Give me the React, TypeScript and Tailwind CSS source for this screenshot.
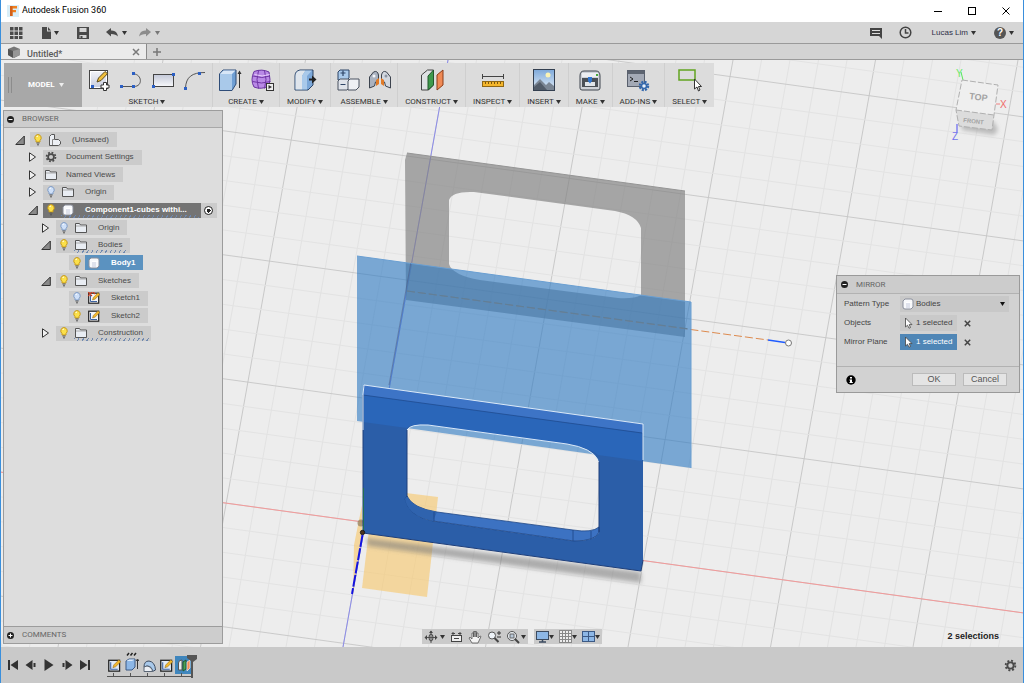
import React from 'react';

interface IconProps {
  children: React.ReactNode;
  size?: number;
  className?: string;
}

const Icon: React.FC<IconProps> = ({ children, size = 16, className = '' }) => (
  <svg
    width={size}
    height={size}
    viewBox={`0 0 ${size} ${size}`}
    className={`block shrink-0 ${className}`}
    fill="none"
    aria-hidden="true"
  >
    {children}
  </svg>
);

const Caret: React.FC<{ className?: string }> = ({ className = 'text-[#333]' }) => (
  <svg width="5" height="4" viewBox="0 0 5 4" className={`block shrink-0 ${className}`} aria-hidden="true">
    <path d="M0 0h5L2.5 4z" fill="currentColor" />
  </svg>
);

const Gear: React.FC<{ size?: number; color?: string }> = ({ size = 14, color = '#4a4a4a' }) => (
  <svg width={size} height={size} viewBox="0 0 14 14" fill="none" className="block shrink-0" aria-hidden="true">
    <circle cx="7" cy="7" r="5.2" stroke={color} strokeWidth="2" strokeDasharray="2.1 1.98" />
    <circle cx="7" cy="7" r="3.4" stroke={color} strokeWidth="2" />
  </svg>
);

/* ---------- toolbar icons ---------- */

const SketchIcon = () => (
  <Icon size={24}>
    <defs>
      <linearGradient id="sketchFill" x1="0" y1="0" x2="0" y2="1">
        <stop stopColor="#f4f5f9" />
        <stop offset="1" stopColor="#c6cbdc" />
      </linearGradient>
    </defs>
    <rect x="2.500" y="2.500" width="18" height="18" fill="url(#sketchFill)" stroke="#444" />
    <rect x="3.500" y="3.500" width="16" height="16" stroke="#fff" />
    <path d="M10 14l1.500-4L18 3.500l2.500 2.200L14 12.500z" fill="#f0bf3c" stroke="#5b4a1c" />
    <rect x="4" y="17" width="3" height="3" fill="#2b5fc4" />
    <path d="M16.500 14.500h3v2.500h2.500v3h-2.500v2.500h-3V20H14v-3h2.500z" fill="#fff" stroke="#333" />
  </Icon>
);

const LineIcon = () => (
  <Icon size={24}>
    <path d="M2 18.500h13c9 0 8-12 0-12.500" stroke="#555" />
    <rect x="1" y="17" width="3" height="3" fill="#2b5fc4" />
    <rect x="13" y="17" width="3" height="3" fill="#2b5fc4" />
    <rect x="13" y="4" width="3" height="3" fill="#2b5fc4" />
  </Icon>
);

const RectIcon = () => (
  <Icon size={24}>
    <defs>
      <linearGradient id="rectFill" x1="0" y1="0" x2="0" y2="1">
        <stop stopColor="#c3c8d8" />
        <stop offset="1" stopColor="#f7f8fa" />
      </linearGradient>
    </defs>
    <rect x="2.500" y="6.500" width="20" height="12" fill="url(#rectFill)" stroke="#444" />
    <rect x="1" y="17" width="3" height="3" fill="#2b5fc4" />
    <rect x="21" y="5" width="3" height="3" fill="#2b5fc4" />
  </Icon>
);

const ArcIcon = () => (
  <Icon size={24}>
    <path d="M2.500 20C3 9 9 4.500 22 4.500" stroke="#555" />
    <rect x="1" y="19" width="3" height="3" fill="#2b5fc4" />
    <rect x="15" y="4" width="3" height="3" fill="#2b5fc4" />
  </Icon>
);

const ExtrudeIcon = () => (
  <Icon size={24}>
    <path d="M1.500 6L5 2h13v14l-4 6.500H1.500z" fill="#6f9fd4" stroke="#2f4d78" />
    <path d="M2 6l3.500-3.500h12L14 6z" fill="#d7e6f7" />
    <rect x="2" y="6" width="12" height="16" fill="#a9c9ea" />
    <path d="M21.500 5v15" stroke="#333" />
    <path d="M19.500 6l2-3.500 2 3.500z" fill="#333" />
  </Icon>
);

const FormIcon = () => (
  <Icon size={24}>
    <path d="M4 3.500Q12 .5 19 4q2 8 0 14-8 4-15 1-4-7 0-15.500z" fill="#b98ae6" stroke="#6a35a0" />
    <path d="M3 8q9 3 17 0M2.500 13.500q9 3 18 0M8.500 2.500q-3 9 0 18M14.500 2.500q3 9 0 18" stroke="#6f35a5" />
    <path d="M4.500 6.500q8 3 15 0" stroke="#e6cffb" />
    <rect x="16.500" y="15.500" width="7" height="7" fill="#eee" stroke="#333" />
    <path d="M18.500 17l3.500 2-3.500 2z" fill="#333" />
  </Icon>
);

const ModifyIcon = () => (
  <Icon size={24}>
    <path d="M2 8q0-5 5-6h13v15l-5 5H2z" fill="#7ba7d8" stroke="#2d4466" />
    <path d="M2.500 8q0-5 5-5.500h5L9 8v13.500H2.500z" fill="#dfe5ec" />
    <path d="M9 8l3.500-5.500H19L14 8v13.500H9z" fill="#a9c9ea" />
    <path d="M16 10.500h3v-3l4.500 4-4.500 4v-3h-3z" fill="#222" />
  </Icon>
);

const ComponentIcon = () => (
  <Icon size={24}>
    <path d="M2 4l2-2h9v8l-2 2H2z" fill="#a9c9ea" stroke="#2d4466" />
    <path d="M2 13l2-2h9v9l-2 2H2z" fill="#dfe3ea" stroke="#4a5361" />
    <path d="M12 13l2-2h9v8l-3 3h-8z" fill="#eef0f4" stroke="#4a5361" />
    <path d="M4.500 5h5M7 2.500V8M4.500 16.500h5" stroke="#2d4466" strokeWidth="1.200" />
  </Icon>
);

const JointIcon = () => (
  <Icon size={24}>
    <path d="M1.500 20V9l4-5q4-2 5 3v5l-3 2-1 4z" fill="#aab2bf" stroke="#3c434e" />
    <path d="M22.500 20V9l-4-5q-4-2-5 3v5l3 2 1 4z" fill="#d3d8df" stroke="#3c434e" />
    <circle cx="6" cy="8" r="1.500" fill="#f4f6f9" />
    <circle cx="18" cy="8" r="1.500" fill="#8d96a4" />
    <path d="M8 12l3-2v6l-3 2zM16 12l-3-2v6l3 2z" fill="#e07b28" />
  </Icon>
);

const ConstructIcon = () => (
  <Icon size={24}>
    <path d="M1.500 7l6-5h6v15l-5 5h-7z" fill="#dfe2e4" stroke="#444" />
    <path d="M8 8l5.500-6v15L8 22z" fill="#3f9a4c" stroke="#23582c" />
    <path d="M17 7l6-5v15l-6 5z" fill="#f08a55" stroke="#8d3c18" />
  </Icon>
);

const InspectIcon = () => (
  <Icon size={24}>
    <path d="M1.500 6v5M22.500 6v5M2 8.500h20" stroke="#444" />
    <rect x="1.500" y="13.500" width="21" height="5" fill="#f4b62c" stroke="#8f6714" />
    <path d="M4.500 14v2M7.500 14v2M10.500 14v2M13.500 14v2M16.500 14v2M19.500 14v2" stroke="#7b560c" />
  </Icon>
);

const InsertIcon = () => (
  <Icon size={24}>
    <defs>
      <linearGradient id="insertSky" x1="0" y1="0" x2="0" y2="1">
        <stop stopColor="#7ea9da" />
        <stop offset="1" stopColor="#e4eef8" />
      </linearGradient>
    </defs>
    <rect x="1.500" y="1.500" width="21" height="21" fill="url(#insertSky)" stroke="#333f50" />
    <circle cx="16" cy="7" r="2.500" fill="#fbf3b4" />
    <path d="M2 17l6-6 6 6 3-3 5 4v4H2z" fill="#7b8694" />
    <path d="M2 19l6-5 7 8H2z" fill="#525c69" />
  </Icon>
);

const MakeIcon = () => (
  <Icon size={24}>
    <path d="M2 8q0-5 4-5h12q4 0 4 5v12q0 2-2 2H4q-2 0-2-2z" fill="#cdd1d8" stroke="#3f454e" />
    <path d="M4 5h16v4H4z" fill="#eceef2" />
    <rect x="4" y="10" width="16" height="9" fill="#4a5058" />
    <rect x="7" y="14" width="10" height="4" fill="#dfe4ea" />
    <path d="M10 9h4v4l-2 2.500-2-2.500z" fill="#2f75d0" />
    <rect x="18" y="6" width="2" height="2" fill="#4aa83c" />
  </Icon>
);

const AddInsIcon = () => (
  <Icon size={24}>
    <rect x="1.500" y="2.500" width="17" height="16" fill="#a3a9b5" stroke="#59606d" />
    <rect x="2" y="3" width="16" height="3" fill="#5d6470" />
    <path d="M4 9l3 2-3 2M8 13.500h4" stroke="#222" />
    <circle cx="18" cy="18" r="4" stroke="#3468ac" strokeWidth="2.500" strokeDasharray="2 1.140" />
    <circle cx="18" cy="18" r="2.500" fill="#e8f0fa" stroke="#3468ac" strokeWidth="1.500" />
  </Icon>
);

const SelectIcon = () => (
  <Icon size={24}>
    <rect x="1" y="2" width="16" height="10" stroke="#62a420" strokeWidth="1.500" />
    <path d="M16.500 11v10l2.500-2 1.500 4 1.500-1-1.500-3.500h3z" fill="#fff" stroke="#333" />
  </Icon>
);

interface ToolGroup {
  label: string;
  icons: { name: string; icon: React.ReactNode }[];
}

const toolGroups: ToolGroup[] = [
  {
    label: 'SKETCH',
    icons: [
      { name: 'Create Sketch', icon: <SketchIcon /> },
      { name: 'Line', icon: <LineIcon /> },
      { name: 'Rectangle', icon: <RectIcon /> },
      { name: 'Arc', icon: <ArcIcon /> },
    ],
  },
  {
    label: 'CREATE',
    icons: [
      { name: 'Extrude', icon: <ExtrudeIcon /> },
      { name: 'Create Form', icon: <FormIcon /> },
    ],
  },
  { label: 'MODIFY', icons: [{ name: 'Press Pull', icon: <ModifyIcon /> }] },
  {
    label: 'ASSEMBLE',
    icons: [
      { name: 'New Component', icon: <ComponentIcon /> },
      { name: 'Joint', icon: <JointIcon /> },
    ],
  },
  { label: 'CONSTRUCT', icons: [{ name: 'Offset Plane', icon: <ConstructIcon /> }] },
  { label: 'INSPECT', icons: [{ name: 'Measure', icon: <InspectIcon /> }] },
  { label: 'INSERT', icons: [{ name: 'Attached Canvas', icon: <InsertIcon /> }] },
  { label: 'MAKE', icons: [{ name: '3D Print', icon: <MakeIcon /> }] },
  { label: 'ADD-INS', icons: [{ name: 'Scripts', icon: <AddInsIcon /> }] },
  { label: 'SELECT', icons: [{ name: 'Select', icon: <SelectIcon /> }] },
];

const Toolbar = () => (
  <div className="flex h-11 w-max shrink-0 bg-[#dcdcdc] font-[Roboto,sans-serif] text-[8px] text-[#333]">
    <button className="flex w-[78px] items-center bg-[#a8a8a8] pl-1 font-bold text-white">
      <span className="mr-4 h-4 w-1 border-x border-[#8c8c8c]" />
      MODEL
      <Caret className="ml-1 text-[#eee]" />
    </button>
    {toolGroups.map((group) => (
      <div key={group.label} className="flex flex-col items-center border-r border-[#cfcfcf] pt-[5px] last:border-r-0">
        <div className="flex gap-2 px-[5px]">
          {group.icons.map((tool) => (
            <button key={tool.name} aria-label={tool.name}>
              {tool.icon}
            </button>
          ))}
        </div>
        <button className="mt-1 flex items-center gap-0.5 px-[7px] leading-[12px]">
          {group.label}
          <Caret />
        </button>
      </div>
    ))}
  </div>
);

/* ---------- header ---------- */

const TitleBar = () => (
  <header className="flex h-[22px] shrink-0 items-center bg-white pl-1.5">
    <Icon size={12}>
      <rect width="12" height="12" fill="#d9eef8" />
      <path d="M3 1h7v2.500H5.500V5H9v2.200H5.500V11H3z" fill="#f08020" />
      <path d="M3 1h2.500v10H3z" fill="#d2601a" />
    </Icon>
    <h1 className="ml-[3px] font-[Roboto,sans-serif] text-[9px] text-black">Autodesk Fusion 360</h1>
    <div className="ml-auto flex items-center gap-6 pr-3">
      <button aria-label="Minimize">
        <Icon size={10}>
          <path d="M1 5.500h8" stroke="#000" />
        </Icon>
      </button>
      <button aria-label="Maximize">
        <Icon size={10}>
          <rect x="1.500" y="1.500" width="7" height="7" stroke="#000" />
        </Icon>
      </button>
      <button aria-label="Close">
        <Icon size={10}>
          <path d="M1.500 1.500l7 7M8.500 1.500l-7 7" stroke="#000" />
        </Icon>
      </button>
    </div>
  </header>
);

const QuickBar = () => (
  <nav className="flex h-[21px] shrink-0 items-center bg-[#d6d6d6] pl-2 text-[8px] text-[#333]">
    <button aria-label="Data panel">
      <Icon size={14}>
        <path d="M1 1h3.500v3.500H1zM5.500 1H9v3.500H5.500zM10 1h3.500v3.500H10zM1 5.500h3.500V9H1zM5.500 5.500H9V9H5.500zM10 5.500h3.500V9H10zM1 10h3.500v3H1zM5.500 10H9v3H5.500zM10 10h3.500v3H10z" fill="#4a4a4a" />
      </Icon>
    </button>
    <button className="ml-[17px] flex items-center gap-0.5" aria-label="File">
      <Icon size={12}>
        <path d="M2 0h5v4.500h4V12H2z M8 0l3 3.500H8z" fill="#4a4a4a" />
      </Icon>
      <Caret />
    </button>
    <button className="ml-[18px]" aria-label="Save">
      <Icon size={12}>
        <path d="M0 0h12v12H0zM2.500 1v4h7V1zM2.500 8v3h7V8z" fill="#4a4a4a" fillRule="evenodd" />
        <rect x="3.500" y="9" width="2" height="2" fill="#4a4a4a" />
      </Icon>
    </button>
    <button className="ml-[17px] flex items-center gap-1" aria-label="Undo">
      <Icon size={12}>
        <path d="M0 5l5-4v2.500q6-.5 7 6Q10 7 5 7v2.500z" fill="#4a4a4a" />
      </Icon>
      <Caret />
    </button>
    <button className="ml-3 flex items-center gap-1" aria-label="Redo">
      <Icon size={12}>
        <path d="M12 5L7 1v2.500q-6-.5-7 6Q2 7 7 7v2.500z" fill="#8c8c8c" />
      </Icon>
      <Caret className="text-[#777]" />
    </button>
    <div className="ml-auto flex items-center pr-[9px]">
      <button aria-label="Notifications">
        <Icon size={12}>
          <path d="M0 1h12v11L9 9H0z" fill="#444" />
          <path d="M2 3.500h8M2 6.500h8" stroke="#ddd" />
        </Icon>
      </button>
      <button className="ml-[17px]" aria-label="Job status">
        <Icon size={13}>
          <circle cx="6.500" cy="6.500" r="5.300" stroke="#444" strokeWidth="1.500" />
          <path d="M6.500 3v4H9.500" stroke="#444" strokeWidth="1.500" />
        </Icon>
      </button>
      <button className="ml-5 flex items-center gap-[3px] text-[#2e2e48]">
        Lucas Lim
        <Caret />
      </button>
      <button className="ml-[18px] flex items-center gap-[3px]" aria-label="Help">
        <span className="flex h-3 w-3 items-center justify-center rounded-full bg-[#555] text-[10px] font-bold leading-[12px] text-white">
          ?
        </span>
        <Caret />
      </button>
    </div>
  </nav>
);

const TabBar = () => (
  <div className="flex h-[17px] shrink-0 border-y border-[#9a9a9a] bg-[#d3d3d3]">
    <div className="flex w-[146px] items-center border-r border-[#8a8a8a] bg-[#ebebeb] pl-[7px] pr-1.5">
      <Icon size={12}>
        <path d="M0 3l6-2.500L12 3v6l-6 3-6-3z" fill="#777" />
        <path d="M0 3l5 2v7L0 9z" fill="#555" />
        <path d="M5 5l7-2v6l-7 3z" fill="#969696" />
      </Icon>
      <span className="ml-[7px] pt-1 font-[Roboto,sans-serif] text-[9px] leading-[12px] font-medium text-[#5a5a5a]">Untitled*</span>
      <button className="ml-auto" aria-label="Close tab">
        <Icon size={8}>
          <path d="M1 1l6 6M7 1L1 7" stroke="#7a7a7a" strokeWidth="1.500" />
        </Icon>
      </button>
    </div>
    <button className="px-1.5" aria-label="New tab">
      <Icon size={8}>
        <path d="M4 0v8M0 4h8" stroke="#777" strokeWidth="1.500" />
      </Icon>
    </button>
  </div>
);

/* ---------- browser panel ---------- */

const Bulb: React.FC<{ on: boolean }> = ({ on }) => (
  <svg width="8" height="12" viewBox="0 0 8 12" aria-hidden="true">
    <path d="M4 .5a3.400 3.400 0 0 1 2 6V8H2V6.500a3.400 3.400 0 0 1 2-6z" fill={on ? '#fbe04a' : '#cfe0f8'} stroke={on ? '#c79a1c' : '#7d9ac4'} />
    <path d="M2.500 3q.5-1 1.500-1" stroke="#fff" fill="none" />
    <path d="M2.500 9h3M3 10.800h2" stroke="#555" />
  </svg>
);

const Folder = () => (
  <Icon size={12}>
    <path d="M.5 10.500v-9h4l1 1.500h6v7.500z" fill="#e9edf3" stroke="#555" />
    <path d="M1 4h10" stroke="#aaa" />
  </Icon>
);

const BodyIcon = () => (
  <Icon size={12}>
    <path d="M1 3l2-2h6q2 0 2 2v6l-2 2H3q-2 0-2-2z" fill="#f8f9fb" stroke="#8a8f9c" />
    <path d="M4 4.500h6" stroke="#fff" />
    <rect x="4" y="5" width="4" height="5" fill="#dfe2ec" />
  </Icon>
);

const DocIcon = () => (
  <Icon size={12}>
    <path d="M.5 11.500v-9l2-2h3v5h4l2 2v2.500l-2 1.500z" fill="#eceff4" stroke="#555" />
    <path d="M3.500 11V5.500h2" stroke="#888" />
  </Icon>
);

const SketchItemIcon: React.FC<{ first?: boolean; blue?: boolean; size?: number }> = ({ first, blue, size = 12 }) => (
  <svg width={size} height={size} viewBox="0 0 12 12" fill="none" aria-hidden="true" className="block shrink-0">
    <rect x=".7" y="1.200" width="10" height="10" fill={blue ? '#e3ecf8' : '#f5f6f8'} stroke="#222" strokeWidth="1.200" />
    <path d="M2.500 3v6.500H9" stroke="#3c62a0" />
    <path d="M4.500 8l.8-2.500L10 .8 11.800 2.500 7 7.200z" fill="#f2b72e" stroke="#8a6412" strokeWidth=".5" />
    {first && <path d="M0 0l4 4M4 0L0 4M5 0l2 2" stroke="#d23c1e" strokeWidth="1.200" />}
  </svg>
);

interface TreeItem {
  label: string;
  level: 0 | 1 | 2 | 3;
  toggle?: 'open' | 'closed';
  bulb?: 'on' | 'off';
  icon: React.ReactNode;
  hatched?: boolean;
  state?: 'active' | 'selected';
}

const treeItems: TreeItem[] = [
  { label: '(Unsaved)', level: 0, toggle: 'open', bulb: 'on', icon: <DocIcon /> },
  { label: 'Document Settings', level: 1, toggle: 'closed', icon: <Gear size={12} /> },
  { label: 'Named Views', level: 1, toggle: 'closed', icon: <Folder /> },
  { label: 'Origin', level: 1, toggle: 'closed', bulb: 'off', icon: <Folder /> },
  { label: 'Component1-cubes withi...', level: 1, toggle: 'open', bulb: 'on', icon: <BodyIcon />, hatched: true, state: 'active' },
  { label: 'Origin', level: 2, toggle: 'closed', bulb: 'off', icon: <Folder /> },
  { label: 'Bodies', level: 2, toggle: 'open', bulb: 'on', icon: <Folder />, hatched: true },
  { label: 'Body1', level: 3, bulb: 'on', icon: <BodyIcon />, state: 'selected' },
  { label: 'Sketches', level: 2, toggle: 'open', bulb: 'on', icon: <Folder /> },
  { label: 'Sketch1', level: 3, bulb: 'off', icon: <SketchItemIcon first /> },
  { label: 'Sketch2', level: 3, bulb: 'on', icon: <SketchItemIcon /> },
  { label: 'Construction', level: 2, toggle: 'closed', bulb: 'on', icon: <Folder />, hatched: true },
];

const indents = ['pl-[11px]', 'pl-6', 'pl-[37px]', 'pl-[50px]'];

const Toggle: React.FC<{ state?: 'open' | 'closed' }> = ({ state }) => {
  if (!state) return <span className="w-[15px]" />;
  return (
    <button className="w-[15px]" aria-label={state === 'open' ? 'Collapse' : 'Expand'}>
      <Icon size={10}>
        {state === 'open' ? (
          <path d="M.8 9.500h8.500V1z" fill="#8a8a8a" stroke="#333" />
        ) : (
          <path d="M1.500.8v8.500L7.500 5z" fill="#f0f0f0" stroke="#333" />
        )}
      </Icon>
    </button>
  );
};

const TreeRow: React.FC<{ item: TreeItem }> = ({ item }) => {
  const active = item.state === 'active';
  const selected = item.state === 'selected';
  return (
    <li className={`flex h-[15px] items-center ${indents[item.level]}`}>
      <Toggle state={item.toggle} />
      <div className={`flex h-full items-center ${active ? 'bg-[#747474]' : 'bg-[#cbcbcb]'}`}>
        {item.bulb && (
          <button className="flex w-4 justify-center" aria-label="Toggle visibility">
            <Bulb on={item.bulb === 'on'} />
          </button>
        )}
        <div
          className={`relative flex h-full items-center ${active ? 'pr-3.5' : 'pr-2'} ${selected ? 'bg-[#5b92c0]' : ''} ${
            active || selected ? 'font-bold text-white' : 'text-[#4a4a4a]'
          }`}
        >
          <span className={`flex justify-center ${item.bulb ? 'w-[18px]' : 'w-4'}`}>{item.icon}</span>
          <span className={item.bulb ? 'pl-2' : 'pl-[7px]'}>{item.label}</span>
          {item.hatched && (
            <span className="absolute inset-x-0.5 bottom-0 h-[3px] bg-[repeating-linear-gradient(120deg,#7089b0_0_1px,transparent_1px_4px)]" />
          )}
        </div>
      </div>
      {active && (
        <label className="flex h-full w-4 items-center justify-center bg-[#cbcbcb]">
          <input
            type="radio"
            defaultChecked
            aria-label="Activate component"
            className="h-[9px] w-[9px] appearance-none rounded-full border border-[#222] bg-[radial-gradient(#222_0_2px,#fff_2px)]"
          />
        </label>
      )}
    </li>
  );
};

const PanelDot: React.FC<{ plus?: boolean }> = ({ plus }) => (
  <Icon size={7}>
    <circle cx="3.500" cy="3.500" r="3.500" fill="#222" />
    <path d={plus ? 'M1.500 3.500h4M3.500 1.500v4' : 'M1.500 3.500h4'} stroke="#fff" />
  </Icon>
);

const BrowserPanel = () => (
  <aside className="flex w-[220px] shrink-0 flex-col border border-[#9c9c9c] bg-[#dddddd] text-[8px] text-[#4a4a4a]">
    <button className="flex h-[17px] shrink-0 items-center gap-2 border-b border-[#a8a8a8] bg-[#cdcdcd] pl-[3px] font-[Roboto,sans-serif] text-[#666]">
      <PanelDot />
      BROWSER
    </button>
    <ul className="mt-1 flex h-[209px] flex-col justify-between">
      {treeItems.map((item, i) => (
        <TreeRow key={i} item={item} />
      ))}
    </ul>
    <button className="mt-auto flex h-[17px] shrink-0 items-center gap-2 border-t border-[#9c9c9c] bg-[#cdcdcd] pl-[3px] font-[Roboto,sans-serif] text-[#666]">
      <PanelDot plus />
      COMMENTS
    </button>
  </aside>
);

/* ---------- 3D scene ---------- */

const range = (from: number, to: number) => Array.from({ length: to - from + 1 }, (_, i) => from + i);

// ground grid: every fifth line is a major one
const GroundGrid = () => (
  <g fill="none">
    {range(-12, 26).map((n) => (
      <line
        key={`s${n}`}
        x1={448 + n * 28.5}
        y1={60}
        x2={343 + n * 28.5}
        y2={647}
        stroke={n % 5 === 0 ? '#c4c4c4' : '#e2e2e2'}
        strokeWidth={n % 5 === 0 ? 0.9 : 1}
      />
    ))}
    {range(-24, 10).map((n) => (
      <line
        key={`r${n}`}
        x1={0}
        y1={472 + n * 24.8}
        x2={1024}
        y2={613 + n * 24.8}
        stroke={n % 5 === 0 ? '#c6c6c6' : '#e3e3e3'}
        strokeWidth={n % 5 === 0 ? 0.9 : 1}
      />
    ))}
    <line x1="0" y1="472" x2="1024" y2="613" stroke="#f49a9a" />
    <line x1="448" y1="60" x2="343" y2="647" stroke="#8c8cea" />
  </g>
);

const Scene = () => (
  <svg
    className="absolute inset-0 h-full w-full bg-[#ededed]"
    viewBox="0 60 1024 587"
    preserveAspectRatio="xMidYMid slice"
    aria-hidden="true"
  >
    <defs>
      <filter id="soft" x="-10%" y="-50%" width="120%" height="200%">
        <feGaussianBlur stdDeviation="2" />
      </filter>
      <clipPath id="planeClip">
        <path d="M357 256L691 302V468L357 421z" />
      </clipPath>
    </defs>
    <GroundGrid />

    {/* mirrored preview */}
    <path
      d="M407 153L685 191V337L406 300L405 160zM449 200V264Q452 275 480 280L618 298Q634 299 641 295V228Q637 215 615 211L474 192Q452 191 449 200z"
      fill="#808080"
      fillOpacity=".66"
      fillRule="evenodd"
    />
    <path d="M407 153L685 191" stroke="#959595" />

    {/* mirror plane */}
    <path d="M407 291L768 340" stroke="#dd8a4e" strokeDasharray="8 3" />
    <path d="M357 256L691 302V468L357 421z" fill="#2c78c2" fillOpacity=".6" />
    <path d="M357 256L691 302V468" stroke="#6a9fd2" fill="none" />
    <path d="M407 291L690 329" stroke="#5f7f98" strokeDasharray="8 3" clipPath="url(#planeClip)" />
    <path d="M412 256L389 385" stroke="#44507a" strokeOpacity=".45" clipPath="url(#planeClip)" />
    <path d="M768 340L785 342.500" stroke="#1f5cff" strokeWidth="1.500" />
    <circle cx="788.500" cy="343" r="3" fill="#fff" stroke="#777" />

    {/* origin planes */}
    <path d="M374 489L438 497L427 597L362 588z" fill="#f8c766" fillOpacity=".58" />
    <path d="M362 505V533L353 595L354 545z" fill="#f8c766" fillOpacity=".6" />
    <circle cx="361" cy="523" r="3.500" fill="#8c7b5c" fillOpacity=".7" />

    {/* body */}
    <path d="M366 538L641 572V583L368 546z" fill="#777" fillOpacity=".55" filter="url(#soft)" />
    <path
      d="M363 386L643 424V560L641 571L363 533zM407 430V497Q407 516 433 521L574 541Q596 541 599 532V462Q594 448 567 444L428 425Q410 424 407 430z"
      fill="#2b5ea8"
      fillRule="evenodd"
    />
    <path
      d="M363 395L642 433V461L598 455Q590 448 567 444L428 425Q410 424 407 428L363 422z"
      fill="#2a66b9"
    />
    <path d="M364 385L643 424V433L363 395z" fill="#3d74c6" />
    <path d="M363 395L642 433" stroke="#1f4c92" strokeWidth=".8" />
    <path
      d="M407 496Q412 508 437 512L573 530Q592 533 599 527V532Q596 541 574 541L433 521Q408 516 405 499z"
      fill="#3c72c2"
      stroke="#1d4585"
      strokeWidth=".8"
    />
    <path d="M405 499L407 496Q412 508 437 512L433 521Q408 516 405 499z" fill="#2f63ae" />
    <path d="M434 512V521M573 530V541M591 531V539" stroke="#1d4585" strokeWidth=".8" />
    <path d="M599 462V532M407 430V497M363 395V533L641 571L643 560" stroke="#1f3f7a" fill="none" />
    <path d="M363 430V394L364 385L643 424V460" stroke="#dbe9f8" fill="none" />
    <path d="M407 430Q410 424 428 425L567 444Q592 448 598 460" stroke="#dbe9f8" fill="none" />
    <path d="M363.500 488V530" stroke="#23704f" />
    <circle cx="362.500" cy="532.500" r="2.200" fill="#4a3320" stroke="#111" strokeWidth=".8" />
    <path d="M362.500 535L352 594" stroke="#1414e0" strokeWidth="2" strokeDasharray="12 1.500" />
  </svg>
);

const ViewCube = () => (
  <svg
    width="64"
    height="84"
    viewBox="0 0 64 84"
    className="absolute right-[11px] top-1"
    role="img"
    aria-label="View cube"
    fontFamily="'Liberation Sans', sans-serif"
  >
    <defs>
      <filter id="cubeShadow" x="-30%" y="-30%" width="160%" height="160%">
        <feGaussianBlur stdDeviation="2" />
      </filter>
    </defs>
    <path d="M12 50L46 58L50 66L46 71L14 66z" fill="#999" fillOpacity=".6" filter="url(#cubeShadow)" />
    <path d="M13 8L15 16" stroke="#57e957" />
    <text x="8" y="13" fontSize="10" fill="#6bea6b">Y</text>
    <path d="M48 40h4" stroke="#f08080" />
    <text x="52" y="44" fontSize="10" fill="#f06a6a">X</text>
    <path d="M9 60V68" stroke="#8080f0" strokeWidth="1.500" />
    <text x="4" y="76" fontSize="10" fill="#7373ee">Z</text>
    <path d="M14 16L50 21L46 51L8 46z" fill="#efefef" />
    <path d="M8 46L46 51L44 66L11 62z" fill="#dcdcdc" />
    <path d="M14 16L50 21L46 51L44 66L11 62L8 46zM8 46L46 51" stroke="#b0b0b0" strokeDasharray="6 2" fill="none" />
    <text x="21" y="35" fontSize="9" fontWeight="bold" fill="#a3a3a3" transform="rotate(7 21 35)">TOP</text>
    <text x="15" y="58" fontSize="6" fontWeight="bold" fill="#a3a3a3" transform="rotate(7 15 58)">FRONT</text>
  </svg>
);

/* ---------- mirror dialog ---------- */

const Cursor = () => (
  <Icon size={12}>
    <path d="M2.500 1v9l2-1.800 1.500 3 1.500-.7L6.200 7.600H9z" fill="#fff" stroke="#444" strokeWidth=".8" />
  </Icon>
);

const ClearButton: React.FC<{ label: string }> = ({ label }) => (
  <button type="button" aria-label={label} className="ml-[7px]">
    <Icon size={7}>
      <path d="M.8.8l5.400 5.400M6.200.8L.8 6.200" stroke="#444" strokeWidth="1.500" />
    </Icon>
  </button>
);

const MirrorDialog = () => (
  <form
    className="mr-[3px] w-[184px] border border-[#9a9a9a] bg-[#d2d2d2] text-[8px] text-[#444]"
    onSubmit={(e) => e.preventDefault()}
  >
    <h2 className="flex h-[18px] items-center gap-2 border-b border-[#b2b2b2] bg-[#cccccc] pl-1 font-[Roboto,sans-serif] text-[#666]">
      <PanelDot />
      MIRROR
    </h2>
    <div className="flex h-[72px] flex-col gap-[3px] pl-[7px] pr-2.5 pt-0.5">
      <div className="flex h-4 items-center">
        <label htmlFor="patternType" className="w-14">
          Pattern Type
        </label>
        <div className="relative flex h-4 flex-1 items-center bg-[#c8c8c8]">
          <span className="pointer-events-none absolute left-0.5">
            <BodyIcon />
          </span>
          <select id="patternType" className="h-4 w-full appearance-none pl-4 text-[#444]">
            <option>Bodies</option>
          </select>
          <span className="pointer-events-none absolute right-1">
            <Caret className="text-[#111]" />
          </span>
        </div>
      </div>
      <div className="flex h-4 items-center">
        <span className="w-14">Objects</span>
        <button type="button" className="flex h-4 w-[57px] items-center gap-px bg-[#c9c9c9] pl-[3px]">
          <Cursor />1 selected
        </button>
        <ClearButton label="Clear objects" />
      </div>
      <div className="flex h-4 items-center">
        <span className="w-14">Mirror Plane</span>
        <button type="button" className="flex h-4 w-[57px] items-center gap-px bg-[#4f86b6] pl-[3px] text-white">
          <Cursor />1 selected
        </button>
        <ClearButton label="Clear mirror plane" />
      </div>
    </div>
    <div className="flex h-[26px] items-center border-t border-[#b2b2b2] pl-[9px] pr-3">
      <button type="button" aria-label="Info">
        <Icon size={10}>
          <circle cx="5" cy="5" r="4.700" fill="#000" />
          <path d="M4 2h2v1.500H4zM3.500 4.500H6V7h.8v1H3.500V7H4V5.500h-.5z" fill="#fff" />
        </Icon>
      </button>
      <button type="submit" className="ml-auto h-[13px] w-11 border border-[#bbb] bg-[#e4e4e4] text-[9px] leading-[11px] text-[#555]">
        OK
      </button>
      <button type="button" className="ml-[7px] h-[13px] w-11 border border-[#bbb] bg-[#e4e4e4] text-[9px] leading-[11px] text-[#555]">
        Cancel
      </button>
    </div>
  </form>
);

/* ---------- navigation bar ---------- */

const NavigationBar = () => (
  <div className="flex gap-1.5">
    <div className="flex h-[15px] items-center gap-[5px] bg-[#cacaca] px-0.5">
      <button className="flex items-center gap-0.5" aria-label="Orbit">
        <Icon size={14}>
          <path d="M7 1v12M2 7.500h10" stroke="#555" />
          <path d="M5 3l2-2.500L9 3M3 5L.5 7.500 3 10M11 5l2.500 2.500L11 10" fill="#444" />
          <ellipse cx="7" cy="7.500" rx="2" ry="3.500" stroke="#444" />
        </Icon>
        <Caret />
      </button>
      <button aria-label="Look at">
        <Icon size={13}>
          <rect x="1.500" y="5.500" width="10" height="6" fill="#eee" stroke="#444" />
          <path d="M4 8.500h5M2 3.500h3M8 3.500h3M3.500 2L2 3.500 3.500 5M9.500 2L11 3.500 9.500 5" stroke="#444" />
        </Icon>
      </button>
      <button aria-label="Pan">
        <Icon size={14}>
          <path d="M4 13L1 8l1-.8L4 9V3h1.500v4V1.500H7V7V1.500h1.500V7V3H10v5l2-2 1 .5-3 6.500z" fill="#f4f4f4" stroke="#555" strokeWidth=".8" />
        </Icon>
      </button>
      <button aria-label="Zoom">
        <Icon size={14}>
          <circle cx="5" cy="5.500" r="3.500" fill="#eef3f8" stroke="#555" />
          <path d="M7.500 8l4 4" stroke="#444" strokeWidth="2" />
          <path d="M10 3h4M12 1v4M10 7h4" stroke="#333" />
        </Icon>
      </button>
      <button className="flex items-center gap-px" aria-label="Fit">
        <Icon size={14}>
          <circle cx="6" cy="6" r="4.500" fill="#eef3f8" stroke="#555" />
          <rect x="4" y="4" width="4" height="4" fill="#b9c9da" stroke="#666" />
          <path d="M9 9l4 4" stroke="#444" strokeWidth="2" />
        </Icon>
        <Caret />
      </button>
    </div>
    <div className="flex h-[15px] items-center gap-[5px] bg-[#cacaca] px-0.5">
      <button className="flex items-center" aria-label="Display settings">
        <Icon size={13}>
          <rect x=".5" y="1.500" width="12" height="8" fill="#8db7e6" stroke="#3c4b60" />
          <path d="M3 12h7M6.500 10v2" stroke="#3c4b60" strokeWidth="1.500" />
        </Icon>
        <Caret />
      </button>
      <button className="flex items-center" aria-label="Grid and snaps">
        <Icon size={13}>
          <rect width="13" height="13" fill="#eee" />
          <path d="M.5 0v13M3.500 0v13M6.500 0v13M9.500 0v13M12.500 0v13M0 .5h13M0 3.500h13M0 6.500h13M0 9.500h13M0 12.500h13" stroke="#888" />
        </Icon>
        <Caret />
      </button>
      <button className="flex items-center" aria-label="Viewports">
        <Icon size={13}>
          <rect x=".5" y="1.500" width="12" height="10" fill="#8db7e6" stroke="#3c5a85" />
          <path d="M6.500 1v10M1 6.500h11" stroke="#3c5a85" />
        </Icon>
        <Caret />
      </button>
    </div>
  </div>
);

/* ---------- timeline ---------- */

const playback = [
  { name: 'Go to start', d: 'M1 1h2v10H1zM11 1v10L3.500 6z' },
  { name: 'Step back', d: 'M7.500 1v10L.5 6zM8.500 4h2v4h-2z' },
  { name: 'Play', d: 'M1.500 0l9 6-9 6z' },
  { name: 'Step forward', d: 'M4.500 1v10l7-5zM1.500 4h2v4h-2z' },
  { name: 'Go to end', d: 'M9 1h2v10H9zM1 1v10l7.500-5z' },
];

const Timeline = () => (
  <footer className="flex h-9 shrink-0 items-center bg-[#c9c9c9] pl-1.5 pr-1.5">
    <div className="flex gap-1.5">
      {playback.map((item) => (
        <button key={item.name} aria-label={item.name}>
          <Icon size={12}>
            <path d={item.d} fill="#333" />
          </Icon>
        </button>
      ))}
    </div>
    <div className="relative ml-[14px] flex h-9 items-center">
      <span className="absolute left-0.5 right-0 bottom-1.5 h-px bg-[#555]" />
      <button className="flex w-[18px] justify-center" aria-label="Sketch1">
        <SketchItemIcon blue size={13} />
      </button>
      <button className="flex w-[17px] justify-center" aria-label="Extrude1">
        <svg width="14" height="20" viewBox="0 0 14 20" fill="none" className="-mt-1.5 block">
          <path d="M2 3.500L4 1M5.500 3.500l2-2.500M9 3.500L11 1" stroke="#222" strokeWidth="1.500" />
          <path d="M1 9l3-2h6v8l-3 3H1z" fill="#8db7e6" stroke="#3c5a85" />
          <path d="M1.500 9L4 7.500h5.500L7 9z" fill="#dceafa" />
          <path d="M12.500 8v9M11 9l1.500-2L14 9" stroke="#333" />
        </svg>
      </button>
      <button className="flex w-[18px] justify-center" aria-label="Fillet1">
        <Icon size={13}>
          <path d="M1 8q0-6 5-6 6 1 6.500 9l-3 1.500Q9 7 4 7z" fill="#a9c9ea" stroke="#3c4b60" />
          <path d="M1 8l3-1q5 1 5.500 5.500H1z" fill="#eceff4" stroke="#5a6675" />
        </Icon>
      </button>
      <button className="flex w-[17px] justify-center" aria-label="Sketch2">
        <SketchItemIcon blue size={13} />
      </button>
      <button className="flex h-[18px] w-[17px] items-center justify-center bg-[#3f86bd]" aria-label="Mirror1">
        <Icon size={14}>
          <path d="M1.500 12V5q0-3 3.500-3v10z" fill="#e8ecef" stroke="#555" />
          <path d="M6 4l3-2v9l-3 2z" fill="#4ba056" stroke="#23582c" />
          <path d="M10 4l3-2v8l-3 3z" fill="#f08a55" stroke="#fff" strokeWidth=".6" />
        </Icon>
      </button>
      <svg width="12" height="24" viewBox="0 0 12 24" className="absolute -right-1.5 top-2" aria-hidden="true">
        <path d="M1 0h10v4L7 7v16H5V6L1 3z" fill="#555" />
      </svg>
      <span className="absolute bottom-1.5 left-2 flex gap-4">
        {range(0, 4).map((n) => (
          <span key={n} className="h-1 w-px bg-[#555]" />
        ))}
      </span>
    </div>
    <button className="ml-auto" aria-label="Timeline settings">
      <Gear size={13} />
    </button>
  </footer>
);

const App = () => (
  <div className="flex h-screen min-w-max flex-col overflow-hidden border-x border-[#3a8fdc] bg-white font-['Liberation_Sans',Arial,sans-serif]">
    <TitleBar />
    <QuickBar />
    <TabBar />
    <main className="relative flex min-h-0 flex-1 flex-col">
      <Scene />
      <ViewCube />
      <div className="relative px-[3px] pt-[3px]">
        <Toolbar />
      </div>
      <div className="relative flex min-h-0 flex-1 pb-[3px] pl-0.5 pt-[3px]">
        <BrowserPanel />
        <section className="flex flex-1 flex-col justify-between">
          <div className="flex justify-end pt-[165px]">
            <MirrorDialog />
          </div>
          <div className="flex items-center pl-[199px] pr-6">
            <NavigationBar />
            <p className="ml-auto text-[9px] font-bold leading-[15px] text-[#222]">2 selections</p>
          </div>
        </section>
      </div>
    </main>
    <Timeline />
  </div>
);

export default App;
